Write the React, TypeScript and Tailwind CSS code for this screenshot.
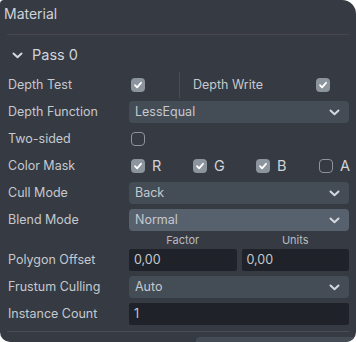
import React from "react";

function Check({ on }: { on: boolean }) {
  if (!on) {
    return <div className="w-[14px] h-[14px] rounded-[4px] border-[1.5px] border-[#8c949e] shrink-0" />;
  }
  return (
    <div className="w-[14px] h-[14px] rounded-[4px] bg-[#8c949e] flex items-center justify-center shrink-0">
      <svg width="10" height="10" viewBox="0 0 10 10">
        <path d="M2 5.2 L4.1 7.3 L8 2.8" stroke="white" strokeWidth="1.8" fill="none" strokeLinecap="round" strokeLinejoin="round" />
      </svg>
    </div>
  );
}

function Chevron() {
  return (
    <svg width="11" height="7" viewBox="0 0 11 7">
      <path d="M1.5 1.5 L5.5 5.3 L9.5 1.5" stroke="#d4d8de" strokeWidth="2" fill="none" strokeLinecap="round" strokeLinejoin="round" />
    </svg>
  );
}

function Select({ value, light }: { value: string; light?: boolean }) {
  return (
    <div
      className={
        "flex-1 h-[22px] rounded-[4px] flex items-center justify-between pl-[6px] pr-[9px] " +
        (light ? "bg-[#57616d]" : "bg-[#444c56]")
      }
    >
      <span>{value}</span>
      <Chevron />
    </div>
  );
}

function Input({ value }: { value: string }) {
  return (
    <div className="flex-1 h-[22px] rounded-[2px] bg-[#1f2228] flex items-center pl-[5px]">
      {value}
    </div>
  );
}

function Row({ label, children }: { label: string; children: React.ReactNode }) {
  return (
    <div className="flex items-center h-[22px]">
      <div className="w-[121px] shrink-0">{label}</div>
      <div className="flex-1 flex items-center">{children}</div>
    </div>
  );
}

const mask: [string, boolean, string][] = [
  ["R", true, "w-[62px]"],
  ["G", true, "w-[63px]"],
  ["B", true, "w-[63px]"],
  ["A", false, ""],
];

export default function App() {
  return (
    <div className="w-[356px] h-[342px] bg-white">
      <div
        className="w-[356px] h-[342px] bg-[#363a42] rounded-tl-[4px] rounded-tr-[14px] rounded-b-[10px] text-[#c5c9cf] text-[12.5px] overflow-hidden flex flex-col"
        style={{ fontFamily: "Inter, 'Noto Sans', sans-serif" }}
      >
        <div className="pl-[4px] pt-[3px] h-[34px] text-[14px] text-[#cfd3d9]">Material</div>
        <div className="mx-[7px] h-px bg-[#4a4650]" />
        <div className="flex items-center gap-[9px] pl-[12px] pt-[1px] h-[39px] text-[14.5px] text-[#d0d4da]">
          <Chevron />
          <span>Pass 0</span>
        </div>
        <div className="flex flex-col gap-[5px] pl-[8px] pr-[7px]">
          <Row label="Depth Test">
            <div className="w-[50px] flex items-center pl-[2px]">
              <Check on />
            </div>
            <div className="w-px h-[26px] bg-[#484c54]" />
            <div className="flex-1 flex items-center justify-between pl-[13px] pr-[19px]">
              <span>Depth Write</span>
              <Check on />
            </div>
          </Row>
          <Row label="Depth Function">
            <Select value="LessEqual" />
          </Row>
          <Row label="Two-sided">
            <div className="pl-[2px]">
              <Check on={false} />
            </div>
          </Row>
          <Row label="Color Mask">
            <div className="flex-1 flex pl-[2px]">
              {mask.map(([c, on, w]) => (
                <div key={c} className={"flex items-center gap-[7px] text-[14.5px] text-[#d0d4da] " + w}>
                  <Check on={on} />
                  <span>{c}</span>
                </div>
              ))}
            </div>
          </Row>
          <Row label="Cull Mode">
            <Select value="Back" />
          </Row>
          <Row label="Blend Mode">
            <Select value="Normal" light />
          </Row>
        </div>
        <div className="flex pl-[129px] pr-[7px] gap-[5px] h-[17px] items-end text-[11px] text-[#b8bcc2]">
          <div className="flex-1 text-center">Factor</div>
          <div className="flex-1 text-center">Units</div>
        </div>
        <div className="flex flex-col gap-[5px] pl-[8px] pr-[7px] mt-[1px]">
          <Row label="Polygon Offset">
            <div className="flex-1 flex gap-[5px]">
              <Input value="0,00" />
              <Input value="0,00" />
            </div>
          </Row>
          <Row label="Frustum Culling">
            <Select value="Auto" />
          </Row>
          <Row label="Instance Count">
            <Input value="1" />
          </Row>
        </div>
        <div className="mx-[7px] mt-[6px] h-px bg-[#4a4e56]" />
        <div className="flex-1 flex items-end">
          <div className="ml-[196px] w-[160px] h-[5px] rounded-t-[4px] bg-[#454c55]" />
        </div>
      </div>
    </div>
  );
}
